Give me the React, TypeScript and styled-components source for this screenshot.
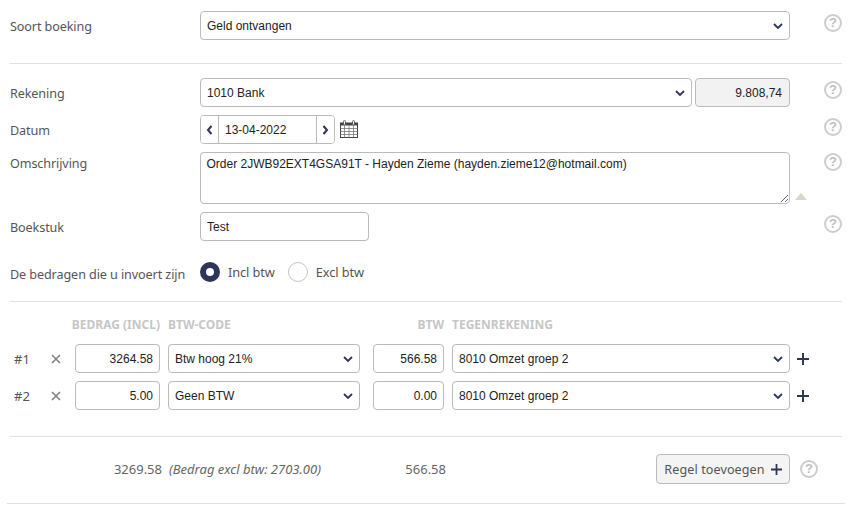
import React from 'react';
import styled, { createGlobalStyle } from 'styled-components';

const navy = '#2e3558';

const GlobalStyle = createGlobalStyle`
  html, body {
    margin: 0;
    padding: 0;
    background: #fff;
  }
  body {
    font-family: "Noto Sans", "Open Sans", sans-serif;
    font-size: 13px;
    color: #555;
  }
`;

const Page = styled.div`
  width: 850px;
  height: 511px;
  overflow: hidden;
  box-sizing: border-box;
  padding: 11px 8px 0 10px;
`;

const Row = styled.div<{ $gap?: number }>`
  display: flex;
  align-items: flex-start;
  margin-bottom: ${({ $gap }) => $gap ?? 8}px;
`;

const Label = styled.label<{ $top?: number }>`
  flex: 0 0 190px;
  padding-top: ${({ $top }) => $top ?? 8}px;
  line-height: 16px;
  font-size: 12.6px;
  letter-spacing: -0.1px;
  color: #555;
`;

const Control = styled.div`
  flex: 0 0 590px;
  display: flex;
  align-items: center;
`;

const Help = styled.span<{ $top?: number }>`
  flex: none;
  box-sizing: border-box;
  width: 18px;
  height: 18px;
  margin: ${({ $top }) => $top ?? 3}px 0 0 34px;
  border: 2px solid #cdcdcd;
  border-radius: 50%;
  color: #bfbfbf;
  font: bold 13px/14px "Liberation Sans", sans-serif;
  text-align: center;
`;

const Divider = styled.hr<{ $before?: number; $after?: number }>`
  border: 0;
  height: 1px;
  background: #e0e0e0;
  margin: ${({ $before }) => $before ?? 0}px 0 ${({ $after }) => $after ?? 0}px;
`;

const BottomDivider = styled(Divider)`
  margin-left: -3px;
  margin-right: -3px;
`;

const fieldBase = `
  box-sizing: border-box;
  height: 29px;
  border: 1px solid #bbb;
  border-radius: 4px;
  background: #fff;
  color: #222;
  font: 12px "Liberation Sans", sans-serif;
  padding: 0 6px;
  outline: none;
`;

const SelectWrap = styled.div<{ $w?: number }>`
  position: relative;
  width: ${({ $w }) => ($w ? `${$w}px` : '100%')};
  flex: none;
`;

const NativeSelect = styled.select`
  ${fieldBase}
  display: block;
  width: 100%;
  appearance: none;
`;

const Chevron = styled.svg`
  position: absolute;
  right: 6px;
  top: 11px;
  width: 12px;
  height: 8px;
  pointer-events: none;
`;

const TextField = styled.input<{ $w: number; $right?: boolean; $muted?: boolean }>`
  ${fieldBase}
  flex: none;
  width: ${({ $w }) => $w}px;
  text-align: ${({ $right }) => ($right ? 'right' : 'left')};
  background: ${({ $muted }) => ($muted ? '#f2f2f2' : '#fff')};
`;

const BalanceField = styled(TextField)`
  margin-left: 3px;
  padding-right: 7px;
`;

const DateGroup = styled.div`
  display: flex;
  box-sizing: border-box;
  width: 135px;
  height: 29px;
  border: 1px solid #bbb;
  border-radius: 4px;
  overflow: hidden;
`;

const DateStep = styled.button`
  flex: 0 0 17px;
  border: 0;
  padding: 0;
  background: #fff;
  display: flex;
  align-items: center;
  justify-content: center;
`;

const DateInput = styled.input`
  flex: 1;
  min-width: 0;
  border: 0;
  border-left: 1px solid #bbb;
  border-right: 1px solid #bbb;
  padding: 0 6px;
  color: #222;
  font: 12px "Liberation Sans", sans-serif;
  outline: none;
`;

const CalendarIcon = styled.svg`
  width: 18px;
  height: 18px;
  margin-left: 5px;
  margin-top: -2px;
`;

const Description = styled.textarea`
  ${fieldBase}
  display: block;
  width: 590px;
  height: 52px;
  padding: 4px 5.5px;
  line-height: 15px;
`;

const CollapseArrow = styled.span`
  width: 0;
  height: 0;
  border-left: 6px solid transparent;
  border-right: 6px solid transparent;
  border-bottom: 7px solid #d8d8c8;
  margin: 41px 0 0 5px;
`;

const DescriptionHelp = styled(Help)`
  margin-left: 17px;
`;

const RadioRow = styled.div`
  display: flex;
  align-items: center;
  height: 22px;
  margin-top: 20px;
`;

const RadioLabel = styled.span`
  flex: 0 0 190px;
  padding-top: 4px;
  font-size: 12.6px;
  letter-spacing: -0.09px;
`;

const Radio = styled.span<{ $on?: boolean }>`
  box-sizing: border-box;
  flex: none;
  width: 20px;
  height: 20px;
  border-radius: 50%;
  border: ${({ $on }) => ($on ? `6px solid ${navy}` : '1px solid #c4c4c4')};
  background: #fff;
`;

const RadioText = styled.span`
  margin: 0 13px 0 8px;
  font-size: 12.8px;
  letter-spacing: -0.1px;
  color: #555;
`;

const HeaderRow = styled.div`
  display: flex;
  height: 16px;
  margin: 15px 0 11px;
  color: #c6c6c6;
  font-size: 12px;
  font-weight: 700;
  line-height: 16px;
  white-space: nowrap;
`;

const Cell = styled.div<{ $w: number; $ml?: number; $right?: boolean }>`
  flex: none;
  width: ${({ $w }) => $w}px;
  margin-left: ${({ $ml }) => $ml ?? 0}px;
  text-align: ${({ $right }) => ($right ? 'right' : 'left')};
`;

const LineRow = styled.div`
  display: flex;
  align-items: center;
  height: 29px;
  margin-bottom: 8px;
`;

const LineNo = styled.div`
  flex: 0 0 36px;
  padding-left: 4px;
  box-sizing: border-box;
  margin-right: 5px;
  color: #555;
`;

const RemoveBtn = styled.svg`
  flex: none;
  width: 10px;
  height: 10px;
  margin: 0 14px 0 0;
`;

const AddIcon = styled.svg`
  flex: none;
  width: 12px;
  height: 12px;
  margin-left: 7px;
`;

const Spaced = styled.div<{ $ml: number }>`
  margin-left: ${({ $ml }) => $ml}px;
  flex: none;
  display: flex;
`;

const TotalsRow = styled.div`
  display: flex;
  align-items: center;
  height: 30px;
  margin: 17px 0 19px;
`;

const TotalCell = styled.div<{ $w: number; $ml?: number }>`
  flex: none;
  width: ${({ $w }) => $w}px;
  margin-left: ${({ $ml }) => $ml ?? 0}px;
  text-align: right;
  color: #666;
`;

const TotalNote = styled.div`
  flex: 0 0 200px;
  margin-left: 7px;
  font-style: italic;
  color: #666;
`;

const AddButton = styled.button`
  box-sizing: border-box;
  display: flex;
  align-items: center;
  justify-content: center;
  width: 134px;
  height: 30px;
  margin-left: 210px;
  padding: 0;
  border: 1px solid #bbb;
  border-radius: 4px;
  background: #f4f4f4;
  color: #555;
  font: 12.6px "Noto Sans", sans-serif;
  letter-spacing: 0.08px;
  white-space: nowrap;
`;

const ButtonPlus = styled(AddIcon)`
  width: 11px;
  height: 11px;
  margin-left: 6px;
`;

const FooterHelp = styled(Help)`
  margin: 0 0 0 10px;
`;

function Select({ value, w }: { value: string; w?: number }) {
  return (
    <SelectWrap $w={w}>
      <NativeSelect value={value} onChange={() => undefined}>
        <option>{value}</option>
      </NativeSelect>
      <Chevron viewBox="0 0 12 8">
        <path d="M2 2l4 4 4-4" fill="none" stroke={navy} strokeWidth="1.8" />
      </Chevron>
    </SelectWrap>
  );
}

function Calendar() {
  return (
    <CalendarIcon viewBox="0 0 18 18">
      <rect x="0.5" y="3" width="17" height="14.5" fill="#fff" stroke="#444" />
      <rect x="0.5" y="3" width="17" height="2.5" fill="#444" />
      <path d="M0.5 8.5h17M0.5 11.5h17M0.5 14.5h17M4.5 5.5v12M9 5.5v12M13.5 5.5v12" stroke="#777" strokeWidth="0.8" />
      <rect x="3.5" y="0.5" width="2" height="4.5" rx="1" fill="#fff" stroke="#444" strokeWidth="0.8" />
      <rect x="12.5" y="0.5" width="2" height="4.5" rx="1" fill="#fff" stroke="#444" strokeWidth="0.8" />
    </CalendarIcon>
  );
}

function Plus() {
  return <path d="M6.5 0v13M0 6.5h13" stroke={navy} strokeWidth="2.1" />;
}

const lines = [
  { no: '#1', amount: '3264.58', code: 'Btw hoog 21%', btw: '566.58' },
  { no: '#2', amount: '5.00', code: 'Geen BTW', btw: '0.00' },
];

export default function App() {
  return (
    <Page>
      <GlobalStyle />
      <Row $gap={0}>
        <Label>Soort boeking</Label>
        <Control>
          <Select value="Geld ontvangen" />
        </Control>
        <Help>?</Help>
      </Row>
      <Divider $before={23} $after={14} />

      <Row>
        <Label>Rekening</Label>
        <Control>
          <Select value="1010 Bank" w={492} />
          <BalanceField $w={95} $right $muted readOnly value="9.808,74" />
        </Control>
        <Help>?</Help>
      </Row>
      <Row>
        <Label>Datum</Label>
        <Control>
          <DateGroup>
            <DateStep>
              <svg width="7" height="10" viewBox="0 0 7 10">
                <path d="M5.5 1L2 5l3.5 4" fill="none" stroke={navy} strokeWidth="2" />
              </svg>
            </DateStep>
            <DateInput readOnly value="13-04-2022" />
            <DateStep>
              <svg width="7" height="10" viewBox="0 0 7 10">
                <path d="M1.5 1L5 5 1.5 9" fill="none" stroke={navy} strokeWidth="2" />
              </svg>
            </DateStep>
          </DateGroup>
          <Calendar />
        </Control>
        <Help>?</Help>
      </Row>
      <Row>
        <Label $top={4}>Omschrijving</Label>
        <Control>
          <Description readOnly value="Order 2JWB92EXT4GSA91T - Hayden Zieme (hayden.zieme12@hotmail.com)" />
        </Control>
        <CollapseArrow />
        <DescriptionHelp $top={1}>?</DescriptionHelp>
      </Row>
      <Row $gap={0}>
        <Label>Boekstuk</Label>
        <Control>
          <TextField $w={169} readOnly value="Test" />
        </Control>
        <Help>?</Help>
      </Row>

      <RadioRow>
        <RadioLabel>De bedragen die u invoert zijn</RadioLabel>
        <Radio $on />
        <RadioText>Incl btw</RadioText>
        <Radio />
        <RadioText>Excl btw</RadioText>
      </RadioRow>
      <Divider $before={18} />

      <HeaderRow>
        <Cell $w={150} $right>BEDRAG (INCL)</Cell>
        <Cell $w={192} $ml={8}>BTW-CODE</Cell>
        <Cell $w={84} $ml={0} $right>BTW</Cell>
        <Cell $w={338} $ml={8}>TEGENREKENING</Cell>
      </HeaderRow>

      {lines.map((line) => (
        <LineRow key={line.no}>
          <LineNo>{line.no}</LineNo>
          <RemoveBtn viewBox="0 0 10 10">
            <path d="M1 1l8 8M9 1l-8 8" stroke="#808080" strokeWidth="1.6" />
          </RemoveBtn>
          <TextField $w={85} $right readOnly value={line.amount} />
          <Spaced $ml={8}>
            <Select value={line.code} w={192} />
          </Spaced>
          <Spaced $ml={13}>
            <TextField $w={71} $right readOnly value={line.btw} />
          </Spaced>
          <Spaced $ml={8}>
            <Select value="8010 Omzet groep 2" w={338} />
          </Spaced>
          <AddIcon viewBox="0 0 13 13">
            <Plus />
          </AddIcon>
        </LineRow>
      ))}

      <Divider $before={26} />
      <TotalsRow>
        <TotalCell $w={152}>3269.58</TotalCell>
        <TotalNote>(Bedrag excl btw: 2703.00)</TotalNote>
        <TotalCell $w={77}>566.58</TotalCell>
        <AddButton>
          Regel toevoegen
          <ButtonPlus viewBox="0 0 13 13">
            <Plus />
          </ButtonPlus>
        </AddButton>
        <FooterHelp>?</FooterHelp>
      </TotalsRow>
      <BottomDivider />
    </Page>
  );
}
